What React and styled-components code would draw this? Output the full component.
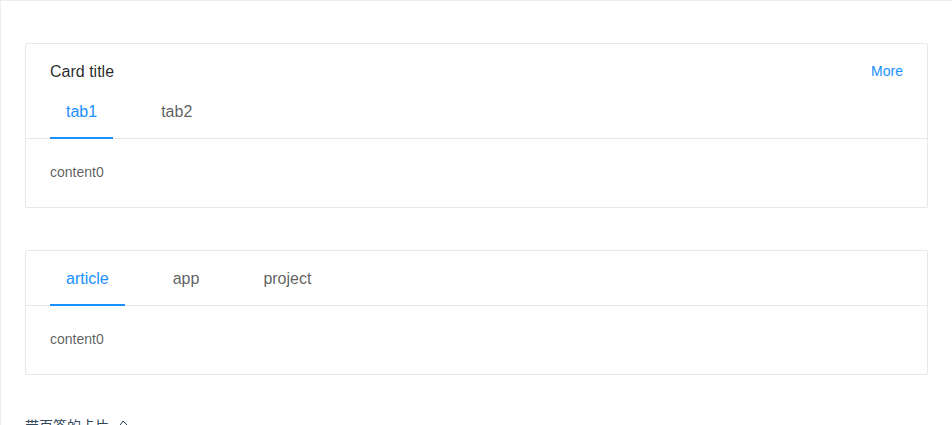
import React, { useState } from "react";
import styled, { createGlobalStyle } from "styled-components";

const GlobalStyle = createGlobalStyle`
  html, body {
    margin: 0;
    padding: 0;
    background: #fff;
    overflow: hidden;
  }
  body {
    font-family: "Liberation Sans", Arial, "Noto Sans CJK SC", sans-serif;
    font-size: 14px;
    color: rgba(0, 0, 0, 0.65);
  }
  * {
    box-sizing: border-box;
  }
`;

const CodeBox = styled.section`
  border: 1px solid #ebedf0;
  border-right: 0;
  border-bottom: 0;
  width: 100%;
`;

const Demo = styled.div`
  display: flex;
  flex-direction: column;
  gap: 42px;
  padding: 42px 24px 24px;
`;

const Card = styled.div`
  background: #fff;
  border: 1px solid #e8e8e8;
  border-radius: 2px;
`;

const CardHead = styled.div`
  padding: 0 24px;
  border-bottom: 1px solid #e8e8e8;
`;

const TitleRow = styled.div`
  display: flex;
  align-items: center;
  justify-content: space-between;
  padding: 17px 0 15px;
`;

const CardTitle = styled.div`
  font-size: 16px;
  line-height: 22px;
  font-weight: 500;
  color: rgba(0, 0, 0, 0.85);
`;

const MoreLink = styled.a`
  font-size: 14px;
  line-height: 22px;
  color: #1890ff;
  text-decoration: none;
  cursor: pointer;
  margin-top: -2px;
`;

const TabBar = styled.div`
  display: flex;
  gap: 32px;
  margin-bottom: -1px;
`;

const Tab = styled.div`
  position: relative;
  padding: ${(p) => p.$top}px 16px 15px;
  font-size: 16px;
  line-height: 24px;
  color: ${(p) => (p.$active ? "#1890ff" : "rgba(0, 0, 0, 0.65)")};
  cursor: pointer;

  &::after {
    content: "";
    display: ${(p) => (p.$active ? "block" : "none")};
    position: absolute;
    left: 0;
    right: 0;
    bottom: 0;
    height: 2px;
    background: #1890ff;
  }
`;

const CardBody = styled.div`
  padding: 23px 24px 25px;
  font-size: 14px;
  line-height: 20px;
  color: rgba(0, 0, 0, 0.65);
`;

const Meta = styled.div`
  display: flex;
  align-items: center;
  gap: 8px;
  padding: 16px 24px;
  font-size: 14px;
  line-height: 22px;
  color: #314659;
`;

const EditIcon = () => (
  <svg width="12" height="12" viewBox="0 0 24 24" fill="none" stroke="#314659" strokeWidth="2">
    <path d="M12 2 L20 10 L9 21 H3 V15 Z" />
  </svg>
);

const TabCard = ({ title, extra, tabs, top }) => {
  const [active, setActive] = useState(0);
  return (
    <Card>
      <CardHead>
        {title ? (
          <TitleRow>
            <CardTitle>{title}</CardTitle>
            {extra ? <MoreLink>{extra}</MoreLink> : null}
          </TitleRow>
        ) : null}
        <TabBar>
          {tabs.map((t, i) => (
            <Tab key={t} $top={top} $active={i === active} onClick={() => setActive(i)}>
              {t}
            </Tab>
          ))}
        </TabBar>
      </CardHead>
      <CardBody>content0</CardBody>
    </Card>
  );
};

const App = () => {
  return (
    <>
      <GlobalStyle />
      <CodeBox>
        <Demo>
          <TabCard title="Card title" extra="More" tabs={["tab1", "tab2"]} top={2} />
          <TabCard tabs={["article", "app", "project"]} top={16} />
        </Demo>
        <Meta>
          带页签的卡片
          <EditIcon />
        </Meta>
      </CodeBox>
    </>
  );
};

export default App;
